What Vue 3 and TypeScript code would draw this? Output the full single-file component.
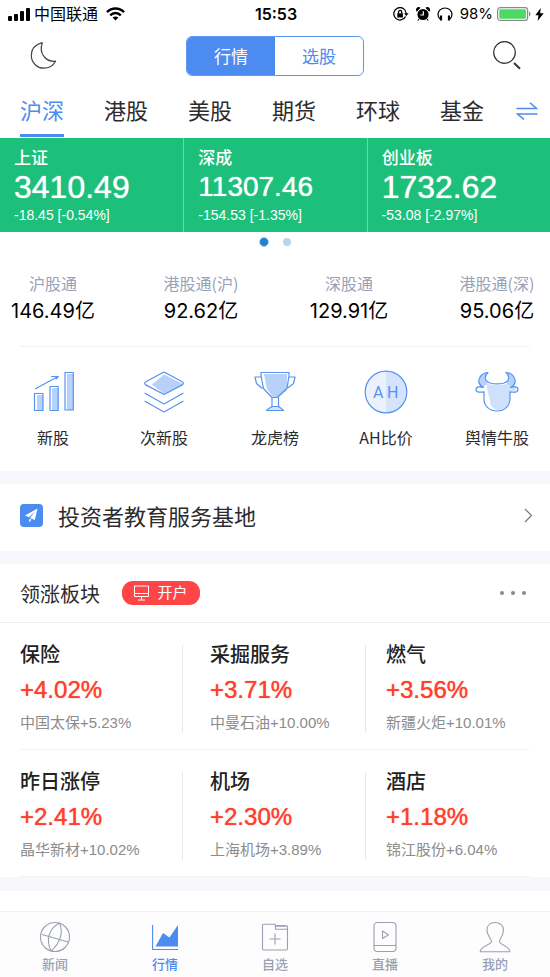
<script setup lang="ts">
import { ref } from 'vue'

interface IndexQuote { name: string; value: string; change: string; long?: boolean }
interface Sector { name: string; pct: string; lead: string }

const modes = ['行情', '选股']
const mode = ref(0)
const markets = ['沪深', '港股', '美股', '期货', '环球', '基金']
const market = ref(0)

const indices: IndexQuote[] = [
  { name: '上证', value: '3410.49', change: '-18.45 [-0.54%]' },
  { name: '深成', value: '11307.46', change: '-154.53 [-1.35%]', long: true },
  { name: '创业板', value: '1732.62', change: '-53.08 [-2.97%]' },
]

const flows = [
  { name: '沪股通', value: '146.49亿' },
  { name: '港股通(沪)', value: '92.62亿' },
  { name: '深股通', value: '129.91亿' },
  { name: '港股通(深)', value: '95.06亿' },
]

const tools = ['新股', '次新股', '龙虎榜', 'AH比价', '舆情牛股']

const sectors: Sector[] = [
  { name: '保险', pct: '+4.02%', lead: '中国太保+5.23%' },
  { name: '采掘服务', pct: '+3.71%', lead: '中曼石油+10.00%' },
  { name: '燃气', pct: '+3.56%', lead: '新疆火炬+10.01%' },
  { name: '昨日涨停', pct: '+2.41%', lead: '晶华新材+10.02%' },
  { name: '机场', pct: '+2.30%', lead: '上海机场+3.89%' },
  { name: '酒店', pct: '+1.18%', lead: '锦江股份+6.04%' },
]

const pages = ['新闻', '行情', '自选', '直播', '我的']
const page = ref(1)
</script>

<template>
  <div class="page">
    <div class="status">
      <div class="status-side">
        <svg width="22" height="14" viewBox="0 0 22 14" aria-hidden="true">
          <rect x="0" y="9" width="4" height="5" rx="1" /><rect x="6" y="7" width="4" height="7" rx="1" />
          <rect x="12" y="4" width="4" height="10" rx="1" /><rect x="18" y="1" width="4" height="13" rx="1" />
        </svg>
        <span class="carrier">中国联通</span>
        <svg width="19" height="14" viewBox="0 0 19 14" fill="none" stroke="#000" stroke-width="2.5" aria-hidden="true">
          <path d="M1 5.2C5.8.3 13.2.3 18 5.2M4.2 8.3c3-3 7.600-3 10.600 0" />
          <path d="M9.500 13.500 6.600 10.600c1.700-1.600 4.100-1.600 5.800 0z" fill="#000" stroke="none" />
        </svg>
      </div>
      <span class="clock">15:53</span>
      <div class="status-side right">
        <svg class="indicator" width="16" height="14" viewBox="0 0 16 14" fill="none" stroke="#000" stroke-width="1.300" aria-hidden="true">
          <path d="M12.600 9.500A6.200 6.200 0 1 1 13.200 6.500" /><path d="M11 6.200h4.600L13.300 9z" fill="#000" stroke="none" />
          <rect x="4.300" y="6.300" width="5.600" height="4.200" fill="#000" stroke="none" /><path d="M5.500 6.500V5a1.600 1.600 0 0 1 3.200 0v1.500" />
        </svg>
        <svg class="indicator" width="14" height="14" viewBox="0 0 14 14" aria-hidden="true">
          <circle cx="7" cy="7.500" r="5.600" /><path d="M1.200 4.200A2 2 0 0 1 4 1.300M12.800 4.200A2 2 0 0 0 10 1.300M3 12l-1.200 1.500M11 12l1.200 1.500" stroke="#000" stroke-width="1.200" />
          <path d="M7.300 4.300V8H4.300" fill="none" stroke="#fff" stroke-width="1.200" />
        </svg>
        <svg class="indicator" width="16" height="14" viewBox="0 0 16 14" fill="none" stroke="#000" stroke-width="1.200" aria-hidden="true">
          <path d="M3 12C1.500 10.500 1 9 1 7.500a7 6.500 0 0 1 14 0c0 1.500-.5 3-2 4.500" />
          <path d="M4 8.500v5M12 8.500v5" stroke-width="2.200" />
        </svg>
        <span class="battery-text">98%</span>
        <svg width="34" height="14" viewBox="0 0 34 14" aria-hidden="true">
          <rect x=".6" y=".6" width="30" height="12.800" rx="2.500" fill="#fff" stroke="#8c8c8c" stroke-width="1.200" />
          <rect x="2.300" y="2.300" width="26.600" height="9.400" rx="1" fill="#4cd964" /><path d="M32 4.500c2 .6 2 4.400 0 5z" fill="#8c8c8c" />
        </svg>
        <svg width="9" height="13" viewBox="0 0 9 13" aria-hidden="true"><path d="M5.700 0 .3 7.200h3.200L2.600 13 8.700 5.200H5.200z" /></svg>
      </div>
    </div>

    <header class="header">
      <button type="button" aria-label="夜间模式">
        <svg width="28" height="30" viewBox="0 0 28 30" fill="none" stroke="#444" stroke-width="1.200" stroke-linejoin="round">
          <path d="M13.300 1.700C6.200 3.500 2.300 8.500 2.300 14.600 2.300 21.500 8 27.200 15 27.200c5 0 9-2.500 11.600-7-4.500.5-8.400-.9-11.200-4.200C12 12 11.400 7 13.300 1.700z" />
        </svg>
      </button>
      <div class="segment">
        <button v-for="(m, i) in modes" :key="m" type="button" :class="{ on: mode === i }" @click="mode = i">{{ m }}</button>
      </div>
      <button type="button" aria-label="搜索">
        <svg width="28" height="30" viewBox="0 0 28 30" fill="none" stroke="#333">
          <circle cx="11.500" cy="11.500" r="10.800" stroke-width="1.200" /><path d="m21 22 6 5.800" stroke-width="2" />
        </svg>
      </button>
    </header>

    <nav class="markets">
      <button v-for="(m, i) in markets" :key="m" type="button" :class="{ on: market === i }" @click="market = i">{{ m }}</button>
      <button class="swap" type="button" aria-label="切换">
        <svg width="22" height="18" viewBox="0 0 22 18" fill="none" stroke="#4c8bf0" stroke-width="1.500">
          <path d="M.5 6.500h20L14 .8M21.500 12H1.500L8 17.300" />
        </svg>
      </button>
    </nav>

    <section class="indices">
      <a v-for="q in indices" :key="q.name" href="#" class="index">
        <span class="index-name">{{ q.name }}</span>
        <span class="index-value" :class="{ long: q.long }">{{ q.value }}</span>
        <span class="index-change">{{ q.change }}</span>
      </a>
    </section>
    <div class="dots"><i class="on"></i><i></i></div>

    <ul class="flows">
      <li v-for="f in flows" :key="f.name"><span class="flow-name">{{ f.name }}</span><span class="flow-value">{{ f.value }}</span></li>
    </ul>

    <nav class="tools">
      <a v-for="(t, i) in tools" :key="t" href="#">
        <svg width="46" height="44" viewBox="0 0 46 44" fill="none" stroke="#5592f2" stroke-width="1.200" stroke-linejoin="round" aria-hidden="true">
          <template v-if="i === 0">
            <path d="M7 25h6v16H7zM22 18h6v23h-6zM37 4h6v36h-6z" fill="#b7d1f8" stroke="none" />
            <path d="M4.500 23.500h8.500v17H4.500zM20 16.500h8.200v24H20zM35 2.500h8.300v37.500H35zM5 19l23-12.500M21 6.500h7.300L26 9" />
          </template>
          <template v-else-if="i === 1">
            <path d="M23 4.500 42 14 23 24 11 14.500z" fill="#b7d1f8" stroke="none" />
            <path d="m23 2 18.700 10q1.300 1.300 0 2.600L23 24.500 4.300 14.600q-1.300-1.300 0-2.600zM3.500 23 23 34l19.500-11M3.500 31 23 42l19.500-11" />
          </template>
          <template v-else-if="i === 2">
            <path d="M12 4h23v16l-8 7h-6l-6-8z" fill="#b7d1f8" stroke="none" />
            <path d="M9 2.500h28v3l-2 13-10 9h-5l-8.500-9L9 5.500zM9.500 7H3l1.500 6.500 5 4.500h2M36.500 7H43l-1.500 6.500-5 4h-1.500M20 27.500v9M26.500 27.500v9" />
            <path d="M20 36.500h6.500c1.500 1.500 4 2 5 4h-17c1-2 4-2.500 5.500-4z" fill="#d5e4fb" />
          </template>
          <template v-else-if="i === 3">
            <circle cx="23" cy="22" r="21" fill="#ebf2fd" stroke="none" /><path d="M23 1a21 21 0 0 1 0 42z" fill="#d5e3fb" stroke="none" />
            <circle cx="23" cy="22" r="20.800" /><text x="10" y="28" class="ah">A</text><text x="24" y="28" class="ah">H</text>
          </template>
          <template v-else>
            <path d="M12 13.500q11 3 22 0l3 4h5v3l-6 1V30c-1 6-6 10-11 10-6-1-9-4-9-9z" fill="#cfe0fb" stroke="none" />
            <path d="M14 2.500C8 2.500 4 8 5 12.500c.6 2.500 2 4 4 5l5-5C10 10 9.500 6 14 2.500zM32 2.500c6 0 10 5.500 9 10-.6 2.500-2 4-4 5l-5-5c4-2.500 4.500-6.500 0-10z" fill="#b7d1f8" stroke="none" />
            <path d="M9.500 17.500c-2-1-3.900-2.500-4.500-5C4 8 8 2.500 14 2.500 9.500 6.500 11 11.500 16 13c4 1 10 1 14 0 5-1.500 6.500-6.500 2-10.500 6 0 10 5.500 9 10-.6 2.500-2.500 4-4.500 5 3-1.200 7.500-1 7.500 2s-4 3-8 2.300V29c0 7-5.500 12-13 12s-13-5-13-12v-7.200c-4 .7-8 .7-8-2.300s4.500-3.200 7.500-2z" />
          </template>
        </svg>
        <span>{{ t }}</span>
      </a>
    </nav>

    <a href="#" class="promo">
      <svg width="23" height="23" viewBox="0 0 23 23" aria-hidden="true">
        <rect width="23" height="23" rx="4" fill="#4c8bf0" /><path d="M17.500 4.500 5 11.500l4 1.700 6.500-6.200-5.500 7 4.800 2zM9.200 14.800v3.700l2.300-2.700z" fill="#fff" />
      </svg>
      <span>投资者教育服务基地</span>
      <svg width="9" height="15" viewBox="0 0 9 15" fill="none" stroke="#777" stroke-width="1.200" aria-hidden="true"><path d="m1 1 6.500 6.500L1 14" /></svg>
    </a>

    <section class="board">
      <div class="board-head">
        <h2>领涨板块</h2>
        <button class="open-account" type="button">
          <svg width="15" height="16" viewBox="0 0 15 16" fill="none" stroke="#fff" aria-hidden="true"><path d="M.5 1h14v10.500H.5zM.5 8.500h14M7.500 11.500V15M4 15h7" /></svg>
          <span>开户</span>
        </button>
        <button class="more" type="button" aria-label="更多"><i></i><i></i><i></i></button>
      </div>
      <div class="sectors">
        <a v-for="s in sectors" :key="s.name" href="#" class="sector">
          <span class="sector-name">{{ s.name }}</span>
          <span class="sector-pct">{{ s.pct }}</span>
          <span class="sector-lead">{{ s.lead }}</span>
        </a>
      </div>
    </section>

    <nav class="tabbar">
      <button v-for="(p, i) in pages" :key="p" type="button" :class="{ on: page === i }" @click="page = i">
        <svg width="32" height="32" viewBox="0 0 32 32" fill="none" stroke="currentColor" stroke-width="1.100" stroke-linejoin="round" aria-hidden="true">
          <template v-if="i === 0">
            <circle cx="16" cy="16" r="14.500" /><path d="M3 13.500 29 21M20.500 2C9 8 7 20 12 30M20.500 2c4 9 1 20-8.500 28" />
          </template>
          <template v-else-if="i === 2">
            <path d="M3.500 4.500q0-1.200 1.200-1.200h11.500v2h12.300v22.500q0 1.200-1.200 1.200H4.700q-1.200 0-1.200-1.200zM16.500 5.300v3h12M16 12.500v11M10.500 18h11M17 4.500h10v1" />
          </template>
          <template v-else-if="i === 1">
            <path d="M3.600 4v24.500h25.400" /><path d="M6.500 25.500 14 12l6.500 4.500L29 4v21.500z" fill="currentColor" stroke="none" />
          </template>
          <template v-else-if="i === 3">
            <rect x="5" y="1.500" width="22" height="29" rx="3.500" /><path d="M5 24.500h22M13.500 10v7.500l6-3.700z" />
          </template>
          <template v-else>
            <path d="M12.500 21c1-2-4.500-6-4.500-12 0-4.500 3-7.500 8-7.500s8.500 3 8.500 7.500c0 6-5 10-4 12 2 4 10 3.500 10.500 9.800H1.200C1.500 25 10 25 12.500 21z" />
          </template>
        </svg>
        <span>{{ p }}</span>
      </button>
    </nav>
  </div>
</template>

<style>
body {
  margin: 0;
  background: #fff;
}
</style>

<style scoped>
.page {
  display: flex;
  flex-direction: column;
  min-height: 100vh;
  color: #2c2c2e;
  font-family: "Liberation Sans", "Noto Sans CJK SC", sans-serif;
}
button {
  padding: 0;
  border: 0;
  background: none;
  color: inherit;
  font: inherit;
  cursor: pointer;
}
a {
  color: inherit;
  text-decoration: none;
}
svg {
  display: block;
  flex: none;
}
.status {
  display: grid;
  grid-template-columns: 1fr auto 1fr;
  align-items: center;
  height: 28px;
  padding: 0 6px 0 8px;
  color: #000;
  font: 16px/28px Inter, "Noto Sans CJK SC", sans-serif;
}
.status-side {
  display: flex;
  align-items: center;
  gap: 4px;
}
.status-side.right {
  justify-content: flex-end;
}
.indicator {
  margin-right: 3px;
}
.battery-text {
  font-size: 15px;
}
.carrier {
  margin-right: 4px;
}
.clock {
  font-weight: 600;
}
.header {
  display: flex;
  align-items: center;
  justify-content: space-between;
  height: 56px;
  padding: 0 29px;
}
.segment {
  display: flex;
  box-sizing: border-box;
  width: 178px;
  height: 40px;
  overflow: hidden;
  border: 1px solid #5c97f5;
  border-radius: 6px;
}
.segment button {
  flex: 1;
  padding-bottom: 2px;
  color: #4c8bf0;
  font-size: 17px;
}
.segment .on {
  background: #4c8bf0;
  color: #fff;
}
.markets {
  display: flex;
  height: 54px;
  padding: 0 12px 0 20px;
}
.markets button {
  box-sizing: border-box;
  height: 53px;
  border-bottom: 3px solid transparent;
  font-size: 22px;
}
.markets button + button {
  margin-left: 40px;
}
.markets .on {
  border-color: #4c8bf0;
  color: #4c8bf0;
}
.markets .swap {
  margin-left: auto;
  padding-top: 4px;
}
.indices {
  display: grid;
  grid-template-columns: repeat(3, 1fr);
  background: #1dc07b;
  color: #fff;
}
.index {
  display: flex;
  flex-direction: column;
  padding: 10px 0 6px 14px;
}
.index + .index {
  border-left: 1px solid #6ed8ad;
}
.index-name {
  font-size: 17px;
  font-weight: 500;
  line-height: 22px;
}
.index-value {
  font-size: 32px;
  line-height: 34px;
  text-shadow: 0 0 1px currentColor;
}
.index-value.long {
  font-size: 28px;
}
.index-change {
  font-size: 14px;
  line-height: 22px;
}
.dots {
  display: flex;
  align-items: center;
  justify-content: center;
  gap: 14px;
  height: 20px;
}
.dots i {
  width: 8px;
  height: 8px;
  border-radius: 50%;
  background: #b4d7f3;
}
.dots .on {
  border: 1px solid #a9d2f5;
  background: #2080cc;
}
.flows {
  display: flex;
  justify-content: space-between;
  margin: 0;
  padding: 19px 0;
  list-style: none;
}
.flows li {
  display: flex;
  flex-direction: column;
  align-items: center;
  width: 106px;
}
.flow-name {
  color: #9aa1ba;
  font: 16px/24px "Noto Sans CJK SC", sans-serif;
}
.flow-value {
  color: #000;
  font: 20px/32px Inter, "Noto Sans CJK SC", sans-serif;
}
.tools {
  position: relative;
  display: flex;
  justify-content: space-between;
  padding: 24px 0 22px;
}
.tools::before {
  position: absolute;
  inset: 0 20px auto;
  height: 1px;
  background: #f2f2f4;
  content: "";
}
.tools a {
  display: flex;
  flex-direction: column;
  align-items: center;
  gap: 11px;
  width: 106px;
  font: 16px/24px "Noto Sans CJK SC", sans-serif;
}
.ah {
  fill: #5592f2;
  stroke: none;
  font: 16px Roboto, sans-serif;
}
.promo {
  display: flex;
  align-items: center;
  height: 67px;
  padding: 0 17px 0 20px;
  border-top: 13px solid #f7f8fc;
  border-bottom: 13px solid #f7f8fc;
  font-size: 22px;
}
.promo span {
  flex: 1;
  padding: 0 0 6px 15px;
}
.promo svg {
  margin-bottom: 4px;
}
.board {
  border-bottom: 14px solid #f7f8fc;
}
.board-head {
  display: flex;
  align-items: center;
  height: 58px;
  padding: 0 24px 0 20px;
  border-bottom: 1px solid #ececf4;
}
h2 {
  margin: 0;
  font-size: 20px;
  font-weight: 400;
}
.open-account {
  display: flex;
  align-items: center;
  justify-content: center;
  gap: 8px;
  width: 78px;
  height: 24px;
  margin-left: 22px;
  border-radius: 11px;
  background: #ff4545;
  color: #fff;
  font-size: 15px;
  line-height: 20px;
}
.more {
  display: flex;
  gap: 7px;
  margin-left: auto;
  padding: 8px 0;
}
.more i {
  width: 4px;
  height: 4px;
  border-radius: 50%;
  background: #8a8a8a;
}
.sectors {
  display: grid;
  grid-template-columns: 162fr 183fr 165fr;
  margin: 0 20px;
}
.sector {
  position: relative;
  display: flex;
  flex-direction: column;
  padding: 17px 0 13px;
  border-bottom: 1px solid #f3f3f6;
}
.sector:nth-child(3n + 2) {
  padding-left: 28px;
}
.sector:nth-child(3n) {
  padding-left: 21px;
}
.sector:not(:nth-child(3n + 1))::before {
  position: absolute;
  inset: 22px auto 16px 0;
  width: 1px;
  background: #e6e7f1;
  content: "";
}
.sector-name {
  color: #222;
  font-size: 20px;
  font-weight: 500;
  line-height: 30px;
}
.sector-pct {
  color: #ff402e;
  font-size: 24px;
  line-height: 40px;
  text-shadow: 0 0 1px currentColor;
}
.sector-lead {
  color: #8c8c8c;
  font-size: 15px;
  line-height: 26px;
}
.tabbar {
  position: sticky;
  bottom: 0;
  display: grid;
  grid-template-columns: repeat(5, 1fr);
  box-sizing: border-box;
  height: 66px;
  margin-top: auto;
  border-top: 1px solid #f2f2f3;
  background: #fdfdfd;
}
.tabbar button {
  display: flex;
  flex-direction: column;
  align-items: center;
  padding-top: 9px;
  color: #9a9fb2;
  font-size: 13px;
  font-weight: 500;
  line-height: 24px;
}
.tabbar .on {
  color: #4c8bf0;
}
</style>
